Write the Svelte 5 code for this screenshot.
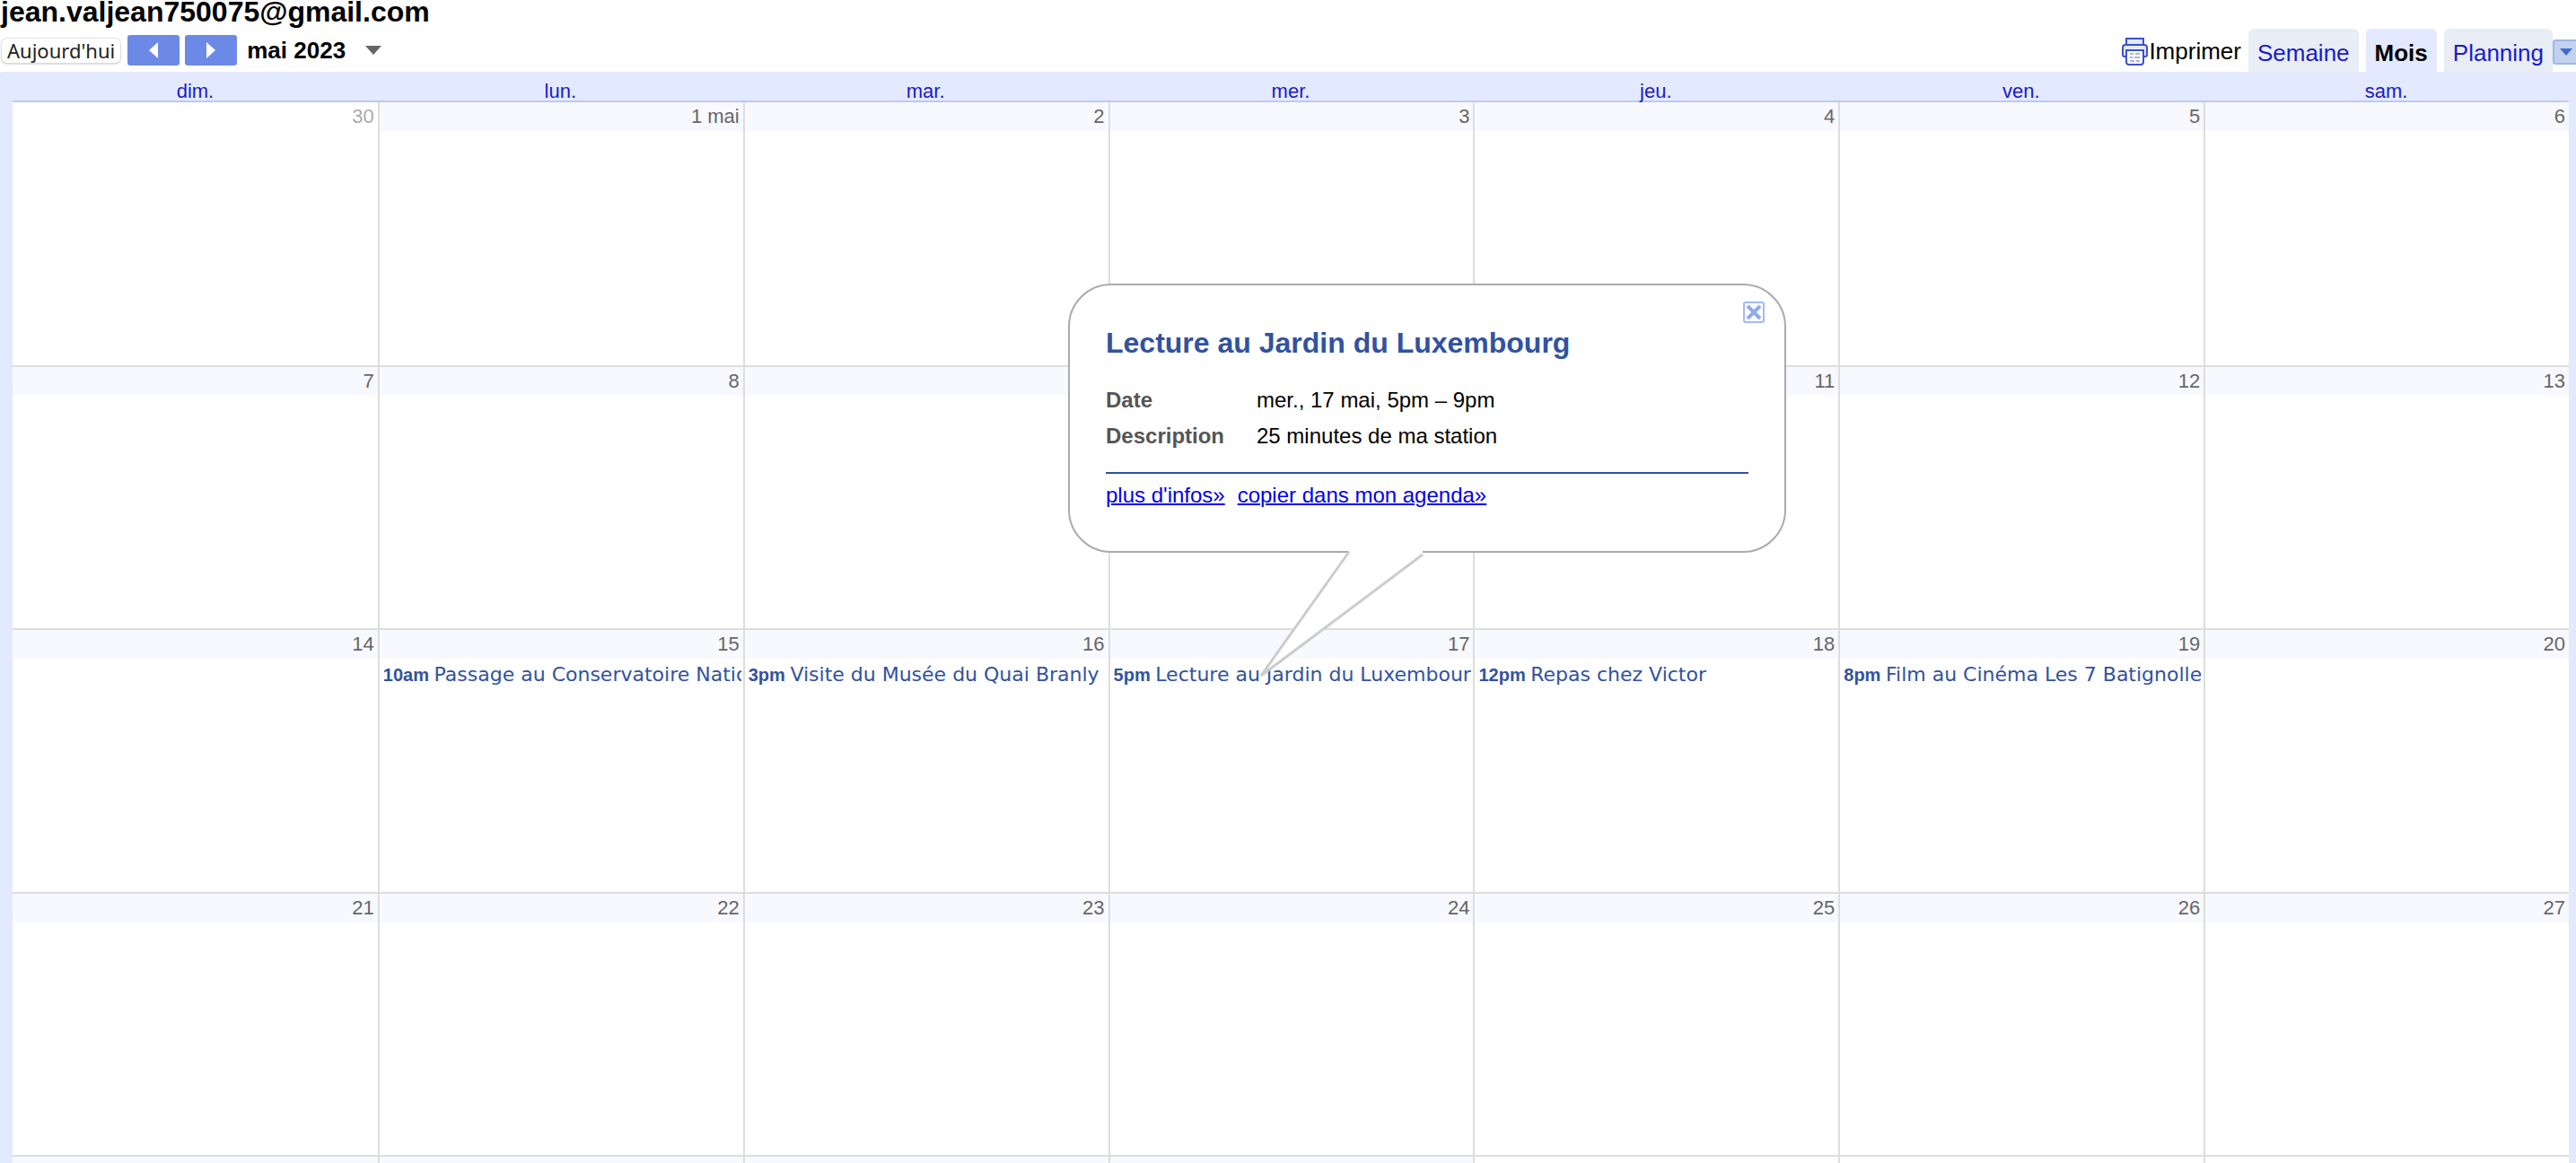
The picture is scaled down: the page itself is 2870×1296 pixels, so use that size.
<script>
  const dayNames = ['dim.', 'lun.', 'mar.', 'mer.', 'jeu.', 'ven.', 'sam.'];
  const tabs = ['Semaine', 'Mois', 'Planning'];

  const events = {
    15: { time: '10am', title: 'Passage au Conservatoire National' },
    16: { time: '3pm', title: 'Visite du Musée du Quai Branly' },
    17: { time: '5pm', title: 'Lecture au Jardin du Luxembourg' },
    18: { time: '12pm', title: 'Repas chez Victor' },
    19: { time: '8pm', title: 'Film au Cinéma Les 7 Batignolles' }
  };

  // Offset 0 is Sunday 30 April; 1 to 31 are the days of May.
  const weeks = Array.from({ length: 5 }, (_, w) =>
    Array.from({ length: 7 }, (_, d) => {
      const n = w * 7 + d;
      const other = n < 1 || n > 31;
      let label = String(n);
      if (n === 0) label = '30';
      if (n === 1) label = '1 mai';
      if (n > 31) label = n === 32 ? '1 juin' : String(n - 31);
      return { label, other, event: other ? null : events[n] };
    })
  );

  let active = $state('Mois');
  let open = $state(true);
</script>

<div class="page">
  <h1>jean.valjean750075@gmail.com</h1>

  <div class="toolbar">
    <div class="nav">
      <button class="today">Aujourd'hui</button>
      <button class="step" aria-label="Mois précédent">
        <svg width="10" height="18" viewBox="0 0 10 18"><path d="M10 0v18L0 9z" fill="#fff" /></svg>
      </button>
      <button class="step" aria-label="Mois suivant">
        <svg width="10" height="18" viewBox="0 0 10 18"><path d="M0 0v18l10-9z" fill="#fff" /></svg>
      </button>
      <button class="period">
        mai 2023
        <svg width="18" height="10" viewBox="0 0 18 10"><path d="M0 0h18L9 10z" fill="#666" /></svg>
      </button>
    </div>

    <div class="views">
      <button class="print">
        <svg width="30" height="32" viewBox="0 0 30 32" fill="none" stroke="#3a50d0" stroke-width="2">
          <path d="M6 8V2h19v6" fill="#e3e9ff" />
          <path d="M6 22H4q-2 0-2-2v-8q0-3 3-3h21q3 0 3 3v8q0 2-2 2h-2" fill="#e3e9ff" />
          <path d="M6 15h19v13q0 3-3 3H9q-3 0-3-3z" fill="#fff" />
          <path d="M10 19h4m2 0h5M10 23h3m2 0h6M10 27h5m2 0h4" stroke="#a9b3ea" />
        </svg>
        <span>Imprimer</span>
      </button>
      <div class="tabs">
        {#each tabs as tab}
          <button class="tab" class:active={active === tab} onclick={() => (active = tab)}>{tab}</button>
        {/each}
      </div>
      <button class="more" aria-label="Autres agendas">
        <svg width="14" height="8" viewBox="0 0 14 8"><path d="M0 0h14L7 8z" fill="#3f6bd0" /></svg>
      </button>
    </div>
  </div>

  <div class="frame">
    <table class="month">
      <thead>
        <tr>
          {#each dayNames as name}<th scope="col"><a href="#jour">{name}</a></th>{/each}
        </tr>
      </thead>
      <tbody>
        {#each weeks as week}
          <tr>
            {#each week as day}
              <td>
                <div class="date" class:other={day.other}>{day.label}</div>
                {#if day.event}
                  <button class="event" onclick={() => (open = true)}><b>{day.event.time}&nbsp;</b>{day.event.title}</button>
                {/if}
              </td>
            {/each}
          </tr>
        {/each}
      </tbody>
    </table>
  </div>

  {#if open}
    <div class="bubble" role="dialog" aria-labelledby="bubble-title">
      <button class="close" aria-label="Fermer" onclick={() => (open = false)}>
        <svg width="24" height="24" viewBox="0 0 24 24" fill="none" stroke="#92a9ee">
          <rect x="1" y="1" width="22" height="22" rx="2" stroke="#a4b8f3" stroke-width="2" />
          <path d="M5 5l14 14M19 5L5 19" stroke-width="4" />
        </svg>
      </button>
      <h2 id="bubble-title">Lecture au Jardin du Luxembourg</h2>
      <dl>
        <dt>Date</dt>
        <dd>mer., 17 mai, 5pm – 9pm</dd>
        <dt>Description</dt>
        <dd>25 minutes de ma station</dd>
      </dl>
      <div class="links">
        <a href="#infos">plus d'infos»</a>
        <a href="#copier">copier dans mon agenda»</a>
      </div>
      <svg class="tail" width="184" height="144" viewBox="0 0 184 144">
        <path d="M99 0L1 139L181 3V0z" fill="#fff" />
        <path d="M99 1L1 139L181 4" fill="none" stroke="#ccc" stroke-width="3" />
      </svg>
    </div>
  {/if}
</div>

<style>
  :global(body) {
    overflow: hidden;
    background: #fff;
  }

  .page {
    position: relative;
    height: 100vh;
    overflow: hidden;
    font-family: 'Liberation Sans', Arial, sans-serif;
    color: #000;
  }

  button {
    margin: 0;
    padding: 0;
    border: 0;
    background: none;
    font: inherit;
    color: inherit;
    cursor: pointer;
  }

  svg {
    display: block;
  }

  h1 {
    margin: 0;
    padding-left: 1px;
    font-size: 32px;
    line-height: 26px;
  }

  .toolbar {
    display: flex;
    justify-content: space-between;
    height: 54px;
    font-size: 26px;
  }

  .nav {
    display: flex;
    align-items: center;
    gap: 6px;
    height: 60px;
    padding-left: 2px;
  }

  .today {
    height: 27px;
    margin-right: 2px;
    padding: 0 6px;
    border-radius: 6px;
    background: #fff;
    box-shadow: 0 0 1px 1px #e0e0e0, 0 1px 2px #999;
    font-family: 'Noto Sans', sans-serif;
    font-size: 22px;
    line-height: 27px;
    color: #222;
  }

  .step {
    display: flex;
    align-items: center;
    justify-content: center;
    width: 58px;
    height: 34px;
    border-radius: 3px;
    background: #6c89e6;
  }

  .period {
    display: flex;
    align-items: center;
    gap: 22px;
    padding-left: 5px;
    font-weight: bold;
  }

  .views {
    display: flex;
    align-items: flex-end;
  }

  .print {
    display: flex;
    align-items: center;
    gap: 1px;
    height: 46px;
    padding-right: 8px;
  }

  .tabs {
    display: flex;
    gap: 8px;
  }

  .tab {
    height: 48px;
    padding: 6px 10px 0;
    border-radius: 6px 6px 0 0;
    background: #e8edf6;
    color: #1a1acc;
  }

  .tab.active {
    background: #e3e9ff;
    color: #000;
    font-weight: bold;
  }

  .more {
    display: flex;
    align-items: center;
    width: 26px;
    height: 28px;
    margin-bottom: 8px;
    padding-left: 6px;
    border: 2px solid #9db8e4;
    border-right: 0;
    border-radius: 3px 0 0 3px;
    background: #c3d1ef;
  }

  .frame {
    padding: 0 8px 0 14px;
    border-top-left-radius: 2px;
    background: #e3e9ff;
  }

  .month,
  thead,
  tbody {
    display: block;
  }

  .month tr {
    display: grid;
    grid-template-columns: repeat(7, minmax(0, 1fr));
  }

  thead {
    border-bottom: 2px solid #b9c9fb;
  }

  th {
    padding: 12px 0 0;
    font-size: 22px;
    font-weight: normal;
    line-height: 20px;
  }

  th a {
    color: #1a1acc;
    text-decoration: none;
  }

  tbody {
    display: grid;
    grid-template-rows: repeat(5, minmax(0, 1fr));
    height: 1466px;
    background: #fff;
  }

  td {
    padding: 0;
    overflow: hidden;
  }

  tbody tr + tr td {
    border-top: 2px solid #ddd;
  }

  td + td {
    border-left: 2px solid #ddd;
  }

  .date {
    padding-right: 4px;
    background: #f8f9ff;
    font-size: 22px;
    line-height: 32px;
    text-align: right;
    color: #666;
  }

  .date.other {
    background: #fff;
    color: #aaa;
  }

  .event {
    display: block;
    width: calc(100% - 6px);
    margin: 0 2px 0 4px;
    overflow: hidden;
    font-family: 'DejaVu Sans', Verdana, sans-serif;
    font-size: 22px;
    line-height: 36px;
    text-align: left;
    white-space: nowrap;
    color: #3152a0;
  }

  .event b {
    font-family: 'Liberation Sans', Arial, sans-serif;
    font-size: 20px;
  }

  .bubble {
    position: absolute;
    top: 316px;
    left: 1190px;
    box-sizing: border-box;
    width: 800px;
    padding: 44px 40px 46px;
    border: 2px solid #aaa;
    border-radius: 48px;
    background: #fff;
    font-size: 24px;
  }

  .close {
    position: absolute;
    top: 18px;
    right: 22px;
  }

  h2 {
    margin: 0 0 24px;
    font-size: 32px;
    line-height: 40px;
    color: #3152a0;
  }

  dl {
    display: grid;
    grid-template-columns: 168px 1fr;
    margin: 0;
    padding-bottom: 20px;
    border-bottom: 2px solid #3152a0;
    line-height: 40px;
  }

  dt {
    font-weight: bold;
    color: #555;
  }

  dd {
    margin: 0;
  }

  .links {
    display: flex;
    gap: 14px;
    padding-top: 8px;
    line-height: 32px;
  }

  .links a {
    color: #00e;
    text-decoration-thickness: 2px;
  }

  .tail {
    position: absolute;
    top: 296px;
    left: 212px;
  }
</style>
